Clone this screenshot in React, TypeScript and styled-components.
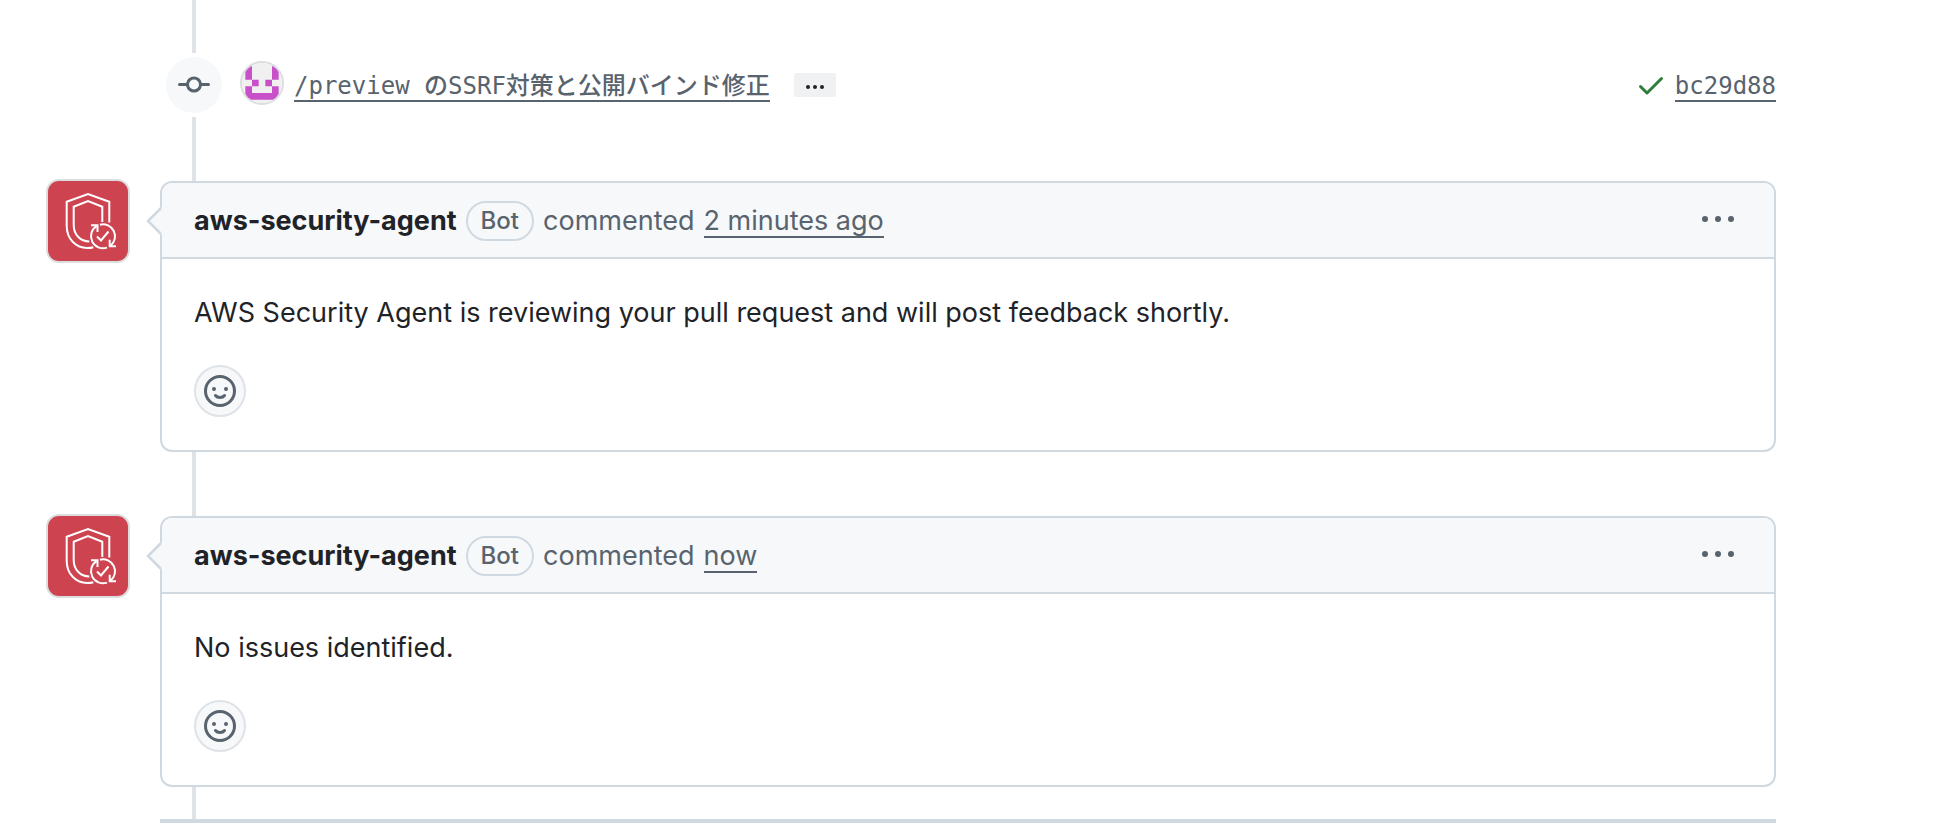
import React from 'react';
import styled, { createGlobalStyle } from 'styled-components';

const color = {
  text: '#1f2328',
  muted: '#59636e',
  border: '#d1d9e0',
  rail: '#dfe3e8',
  subtle: '#f6f8fa',
  success: '#2f7d3b',
  brand: '#cd4350',
};

const GlobalStyle = createGlobalStyle`
  *, *::before, *::after { box-sizing: border-box; }
  body {
    margin: 0;
    background: #ffffff;
    color: ${color.text};
    font: 400 27px/40px Inter, "Noto Sans CJK JP", sans-serif;
  }
  button { font: inherit; cursor: pointer; }
`;

const Timeline = styled.main`
  padding: 0 164px 0 160px;
`;

const Rail = styled.div<{ $height: number }>`
  width: 4px;
  height: ${(p) => p.$height}px;
  margin-left: 32px;
  background: ${color.rail};
`;

const EndBar = styled.hr`
  height: 4px;
  margin: 0;
  border: 0;
  background: ${color.border};
`;

const CommitRow = styled.section`
  display: flex;
  align-items: center;
  height: 64px;
  padding-left: 6px;
`;

const CommitBadge = styled.span`
  display: grid;
  place-items: center;
  width: 56px;
  height: 56px;
  border-radius: 50%;
  background: ${color.subtle};
  color: ${color.muted};
`;

const AuthorLink = styled.a`
  display: block;
  width: 44px;
  height: 44px;
  margin: 0 10px 4px 18px;
  border: 2px solid #dcdddf;
  border-radius: 50%;
  overflow: hidden;
`;

const MonoLink = styled.a`
  height: 34px;
  border-bottom: 2px solid ${color.muted};
  color: ${color.muted};
  font: 500 24px/36px "DejaVu Sans Mono", "Noto Sans CJK JP", monospace;
  text-decoration: none;
`;

const ExpandButton = styled.button`
  display: grid;
  place-items: center;
  width: 42px;
  height: 24px;
  margin-left: 24px;
  padding: 0;
  border: 0;
  border-radius: 2px;
  background: #eff1f3;
  color: ${color.text};
`;

const CommitStatus = styled.div`
  display: flex;
  align-items: center;
  gap: 8px;
  margin-left: auto;
  color: ${color.success};
`;

const CommentRow = styled.article`
  position: relative;
`;

const AvatarLink = styled.a`
  position: absolute;
  top: -2px;
  left: -114px;
  display: block;
  width: 84px;
  height: 84px;
  border: 2px solid #dcdddf;
  border-radius: 13px;
  overflow: hidden;
  background: ${color.brand};
`;

const Caret = styled.svg`
  position: absolute;
  top: 24px;
  left: -14px;
`;

const Card = styled.div`
  border: 2px solid ${color.border};
  border-radius: 12px;
  background: #ffffff;
`;

const CardHeader = styled.header`
  display: flex;
  align-items: center;
  height: 76px;
  padding: 0 24px 0 32px;
  border-bottom: 2px solid ${color.border};
  border-radius: 10px 10px 0 0;
  background: ${color.subtle};
  color: ${color.muted};
`;

const Byline = styled.div`
  display: flex;
  align-items: center;
  gap: 9px;
  padding-top: 2px;
`;

const AuthorName = styled.a`
  color: ${color.text};
  font-weight: 700;
  text-decoration: none;
`;

const BotLabel = styled.span`
  padding: 0 13px;
  border: 2px solid ${color.border};
  border-radius: 20px;
  font-size: 24px;
  font-weight: 500;
  line-height: 36px;
`;

const TimeLink = styled.a`
  height: 34px;
  border-bottom: 2px solid ${color.muted};
  color: inherit;
  line-height: 34px;
  text-decoration: none;
`;

const MenuButton = styled.button`
  display: grid;
  place-items: center;
  width: 64px;
  height: 48px;
  margin-left: auto;
  padding: 0;
  border: 0;
  background: transparent;
  color: ${color.muted};
`;

const CardBody = styled.div`
  padding: 34px 32px 33px;
`;

const CommentText = styled.p`
  margin: 0 0 32px;
`;

const ReactionButton = styled.button`
  display: grid;
  place-items: center;
  width: 52px;
  height: 52px;
  padding: 0;
  border: 2px solid ${color.rail};
  border-radius: 50%;
  background: ${color.subtle};
  color: ${color.muted};
`;

const Glyph = styled.svg.attrs({
  width: 32,
  height: 32,
  viewBox: '0 0 16 16',
  fill: 'currentColor',
  'aria-hidden': true,
})`
  display: block;
`;

const CommitIcon = () => (
  <Glyph>
    <path d="M11.93 8.5a4.002 4.002 0 0 1-7.86 0H.75a.75.75 0 0 1 0-1.5h3.32a4.002 4.002 0 0 1 7.86 0h3.32a.75.75 0 0 1 0 1.5Zm-1.43-.75a2.5 2.5 0 1 0-5 0 2.5 2.5 0 0 0 5 0Z" />
  </Glyph>
);

const CheckIcon = () => (
  <Glyph>
    <path d="M13.78 4.22a.75.75 0 0 1 0 1.06l-7.25 7.25a.75.75 0 0 1-1.06 0L2.22 9.28a.751.751 0 0 1 .018-1.042.751.751 0 0 1 1.042-.018L6 10.94l6.72-6.72a.75.75 0 0 1 1.06 0Z" />
  </Glyph>
);

const KebabIcon = () => (
  <Glyph>
    <circle cx="1.5" cy="7.5" r="1.5" />
    <circle cx="8" cy="7.5" r="1.5" />
    <circle cx="14.5" cy="7.5" r="1.5" />
  </Glyph>
);

const SmileyIcon = () => (
  <Glyph>
    <circle cx="8" cy="8" r="7.25" fill="none" stroke="currentColor" strokeWidth="1.5" />
    <circle cx="5" cy="7" r="1" />
    <circle cx="11" cy="7" r="1" />
    <path
      d="M5.75 10.25C6.2 10.85 7 11.25 8 11.25s1.8-.4 2.25-1"
      fill="none"
      stroke="currentColor"
      strokeWidth="1.5"
      strokeLinecap="round"
    />
  </Glyph>
);

const EllipsisIcon = () => (
  <svg width="18" height="8" viewBox="0 0 18 8" fill="currentColor" aria-hidden="true">
    <circle cx="2" cy="6" r="2" />
    <circle cx="9" cy="6" r="2" />
    <circle cx="16" cy="6" r="2" />
  </svg>
);

const Identicon = () => (
  <svg width="40" height="40" viewBox="0 0 420 420" display="block" aria-hidden="true">
    <rect width="420" height="420" fill="#f0f0f0" />
    <path
      fill="#c850c8"
      d="M35 35h70v140H35zM315 35h70v140h-70zM105 175h70v70h-70zM245 175h70v70h-70zM35 245h70v70h210v-70h70v140H35z"
    />
  </svg>
);

const ShieldLogo = () => (
  <svg width="80" height="80" viewBox="0 0 80 80" fill="none" stroke="#ffffff" strokeWidth="2" display="block" aria-hidden="true">
    <path d="M61.3 41.5V20.7L40 13l-21.3 7.7V45c0 13.5 9.8 22 20.3 22 2.6 0 4.6-.2 6.3-.8" />
    <path d="M54.3 41V25.7L40 20l-14.3 5.7V44c0 9.5 6.5 16.3 15.6 16.5" />
    <path d="M48.5 45.2A12 12 0 0 0 59 66.6M52 43.7A12 12 0 0 1 62.5 64.7" />
    <path d="M43 44.3h6.5V51M68 65.3h-6.3v-6.5" />
    <path d="M49 55.5l4 4 7.5-9" />
  </svg>
);

type CommentProps = { time: string; children: React.ReactNode };

const Comment = ({ time, children }: CommentProps) => (
  <CommentRow>
    <AvatarLink href="#agent" aria-label="aws-security-agent">
      <ShieldLogo />
    </AvatarLink>
    <Card>
      <CardHeader>
        <Byline>
          <AuthorName href="#agent">aws-security-agent</AuthorName>
          <BotLabel>Bot</BotLabel>
          <span>commented</span>
          <TimeLink href="#comment">{time}</TimeLink>
        </Byline>
        <MenuButton type="button" aria-label="Show options">
          <KebabIcon />
        </MenuButton>
      </CardHeader>
      <CardBody>
        <CommentText>{children}</CommentText>
        <ReactionButton type="button" aria-label="Add your reaction">
          <SmileyIcon />
        </ReactionButton>
      </CardBody>
    </Card>
    <Caret width="16" height="32" viewBox="0 0 16 32" aria-hidden="true">
      <path d="M16 2L2 16l14 14z" fill={color.subtle} />
      <path d="M15 3L2 16l13 13" fill="none" stroke={color.border} strokeWidth="2.5" />
    </Caret>
  </CommentRow>
);

export default function App() {
  return (
    <>
      <GlobalStyle />
      <Timeline>
        <Rail $height={53} />
        <CommitRow>
          <CommitBadge>
            <CommitIcon />
          </CommitBadge>
          <AuthorLink href="#author" aria-label="Commit author">
            <Identicon />
          </AuthorLink>
          <MonoLink href="#commit">/preview のSSRF対策と公開バインド修正</MonoLink>
          <ExpandButton type="button" aria-label="Show commit description">
            <EllipsisIcon />
          </ExpandButton>
          <CommitStatus>
            <CheckIcon />
            <MonoLink href="#commit">bc29d88</MonoLink>
          </CommitStatus>
        </CommitRow>
        <Rail $height={64} />
        <Comment time="2 minutes ago">
          AWS Security Agent is reviewing your pull request and will post feedback shortly.
        </Comment>
        <Rail $height={64} />
        <Comment time="now">No issues identified.</Comment>
        <Rail $height={32} />
        <EndBar />
      </Timeline>
    </>
  );
}
